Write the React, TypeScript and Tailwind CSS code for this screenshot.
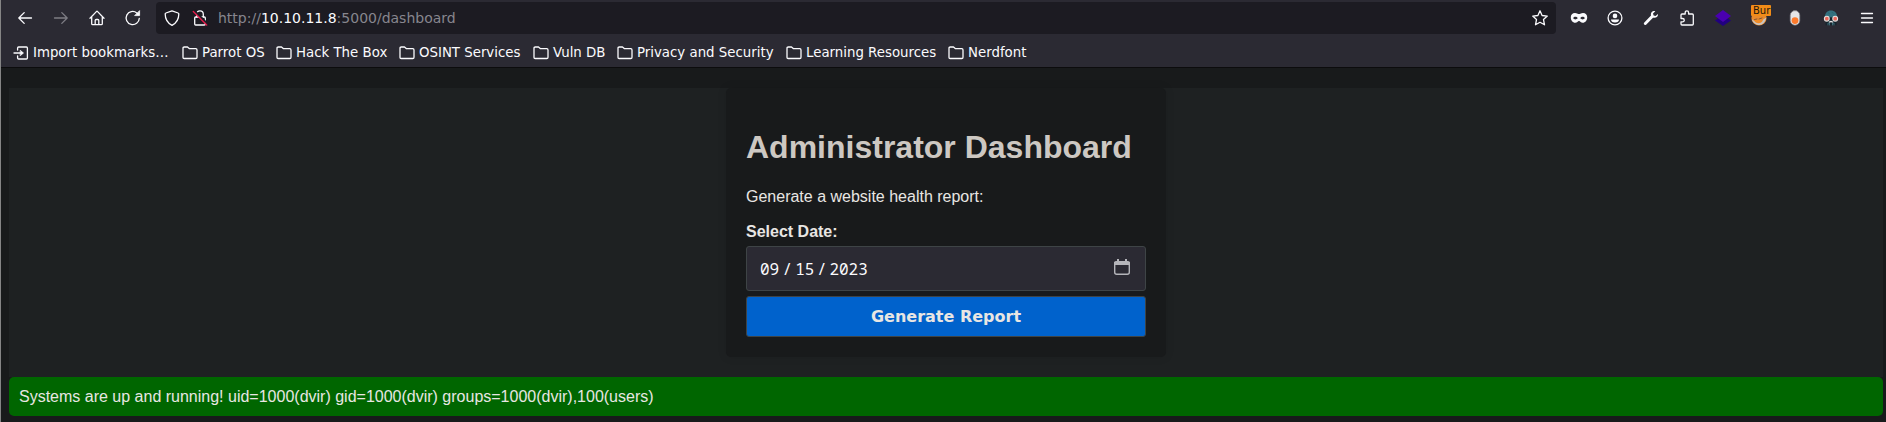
import type { ReactNode } from "react";

function Icon({ children, className = "" }: { children: ReactNode; className?: string }) {
  return (
    <svg viewBox="0 0 16 16" className={`h-4 w-4 shrink-0 overflow-visible ${className}`} fill="none" stroke="#fbfbfe" strokeWidth="1.3" strokeLinecap="round" strokeLinejoin="round">
      {children}
    </svg>
  );
}

function ToolButton({ children, label }: { children: ReactNode; label: string }) {
  return (
    <button aria-label={label} className="relative flex h-9 w-9 shrink-0 items-center justify-center">
      {children}
    </button>
  );
}

const bookmarks = [
  { name: "Parrot OS", width: "w-[94px]" },
  { name: "Hack The Box", width: "w-[123px]" },
  { name: "OSINT Services", width: "w-[134px]" },
  { name: "Vuln DB", width: "w-[84px]" },
  { name: "Privacy and Security", width: "w-[169px]" },
  { name: "Learning Resources", width: "w-[162px]" },
  { name: "Nerdfont", width: "w-[100px]" },
];

function NavigationBar() {
  return (
    <div className="flex h-9 pl-[6px]">
      <ToolButton label="Back">
        <Icon><path d="M14.5 8H1.8M7.2 2.6 1.8 8l5.4 5.4" /></Icon>
      </ToolButton>
      <ToolButton label="Forward">
        <Icon className="opacity-40"><path d="M1.5 8h12.7M8.8 2.6 14.2 8l-5.4 5.4" /></Icon>
      </ToolButton>
      <ToolButton label="Home">
        <Icon>
          <path d="M1 8.2 7.4 1.6q.6-.6 1.2 0L15 8.2M2.7 6.8v6.9q0 1 1 1h8.6q1 0 1-1V6.8M6.2 14.5v-4q0-1 1-1h1.6q1 0 1 1v4" />
        </Icon>
      </ToolButton>
      <ToolButton label="Reload">
        <Icon>
          <path d="M14.3 8.3A6.6 6.6 0 1 1 11.8 2.9L13.4 4.5" />
          <path d="M14.6 1v4.6H10z" fill="#fbfbfe" strokeWidth=".8" />
        </Icon>
      </ToolButton>
      <div className="mt-[2px] ml-[5px] flex h-8 w-[1400px] shrink-0 items-center rounded-[4px] bg-[#1c1b22] pl-2">
        <Icon>
          <path d="M8 .9 14.1 3q.7.2.7 1C14.8 9.5 12.6 13 8 15.3 3.4 13 1.2 9.5 1.2 4q0-.8.7-1z" />
        </Icon>
        <Icon className="ml-3">
          <path d="M4.7 7V4.2a3.3 3.3 0 0 1 6.6 0V7" />
          <rect x="2.7" y="7" width="10.6" height="8" rx="1" />
          <path d="M2.3 .5 15.7 14" stroke="#1c1b22" strokeWidth="1.8" />
          <path d="M1.3 1.5 14.7 15" stroke="#e31b4b" strokeWidth="1.4" />
        </Icon>
        <span className="ml-[10px] text-[14px] leading-8 text-[#87868e]">
          http://<span className="text-[#fbfbfe]">10.10.11.8</span>:5000/dashboard
        </span>
        <Icon className="mr-2 ml-auto">
          <path d="m8 .8 2.1 4.7 5.2.6-3.8 3.5 1 5.2L8 12.3l-4.5 2.5 1-5.2L.7 6.1l5.200-.6z" />
        </Icon>
      </div>
      <div className="ml-[5px] flex">
        <ToolButton label="Private mask">
          <Icon>
            <path fillRule="evenodd" fill="#fbfbfe" stroke="none" d="M4 3C5.700 3 6.700 4.100 8 4.100S10.300 3 12 3C14.600 3 16.200 4.600 16.200 7.300 16.200 10.400 14.400 12.800 11.700 12.800 9.900 12.800 9.200 11 8 11S6.100 12.800 4.300 12.800C1.600 12.800-.2 10.400-.2 7.300-.2 4.600 1.400 3 4 3M2.200 8C3 9.900 5.600 10 6.700 8 5.600 6.200 3 6.200 2.200 8M13.800 8C13 6.200 10.400 6.200 9.300 8 10.400 10 13 9.900 13.800 8" />
          </Icon>
        </ToolButton>
        <ToolButton label="Account">
          <Icon>
            <circle cx="8" cy="8" r="6.9" />
            <circle cx="8" cy="5.9" r="2.3" fill="#fbfbfe" stroke="none" />
            <path d="M4 9.600h8c0 1.700-1.500 3-4 3s-4-1.300-4-3" fill="#fbfbfe" stroke="none" />
          </Icon>
        </ToolButton>
        <ToolButton label="Developer tools">
          <Icon>
            <path d="M14.900 3.900 12.600 6.100 10.600 5.600 10 3.500 12.300 1.200C9.800.4 7.300 2.500 8 5.500L1.100 12.700c-1 1.300.7 3 2 2l6.900-7c3 .6 5.400-1.400 4.900-3.800" fill="#fbfbfe" stroke="none" />
          </Icon>
        </ToolButton>
        <ToolButton label="Extensions">
          <Icon>
            <path d="M2 6.200V5q0-1 1-1h3.200V2.500a1.700 1.700 0 0 1 3.400 0V4H13.300q1 0 1 1v9q0 1-1 1H3q-1 0-1-1v-2.200h1.600a1.650 1.650 0 0 0 0-3.300H2z" />
          </Icon>
        </ToolButton>
        <ToolButton label="Layers">
          <Icon>
            <path d="M0 10.500 8 5l8 5.500L8 16z" fill="#210080" stroke="none" />
            <path d="m0 5.900 8-5.800 8 5.800L8 12z" fill="#4a00b0" stroke="none" />
          </Icon>
        </ToolButton>
        <ToolButton label="Proxy">
          <Icon>
            <circle cx="8" cy="8" r="7.600" fill="#e88a2c" stroke="none" />
            <path d="M.8 9c3 3.500 8 3.500 14.400-1.500-.5 4-3.500 7.500-7 7.500S1.500 12.500.8 9" fill="#c9c4c2" stroke="none" />
            <path d="M2 8c4 1 7 .5 10.500-1-.5 4.500-2 6-4.500 6.200-2.500 0-5-1-6-5.200" fill="#f08c28" stroke="none" />
            <path d="M3.500 9.500 6 9m2 0 3-1" stroke="#755039" strokeWidth=".9" />
          </Icon>
          <span className="absolute top-[5px] left-[10px] flex h-[11px] w-5 items-center rounded-[1px] bg-[#f28c18] pl-[2px] text-[10px] leading-[11px] text-[#24170c]">
            Bur
          </span>
        </ToolButton>
        <ToolButton label="Toggle">
          <Icon>
            <rect x="3.2" y=".6" width="9.6" height="14.6" rx="4.8" fill="#e4e5e7" stroke="#77777c" strokeWidth=".7" />
            <circle cx="8" cy="10.6" r="3.4" fill="#fc7a2c" stroke="none" />
          </Icon>
        </ToolButton>
        <ToolButton label="User agent">
          <Icon>
            <path d="M1.800 7.500C1.800 3 4.500.5 8 .5S14.200 3 14.200 7.500z" fill="#32717f" stroke="none" />
            <path d="M2.500 7.500h11v7.700h-11z" fill="#16242d" stroke="none" />
            <path d="M5 15v-2h1.500v2m3 0v-2H11v2" stroke="#477b87" strokeWidth=".8" />
            <path d="M6.500 12q1.500-1 3 0" stroke="#e5e6e8" />
            <circle cx="3.8" cy="8.7" r="2.4" fill="#e96659" stroke="#e4dfdc" strokeWidth="1.1" />
            <circle cx="12.2" cy="8.7" r="2.4" fill="#e96659" stroke="#e4dfdc" strokeWidth="1.1" />
            <path d="m5.500 3 1 .7M9 2.200l1 1" stroke="#28606d" strokeWidth=".8" />
          </Icon>
        </ToolButton>
        <ToolButton label="Menu">
          <Icon><path d="M2.500 3.500h11M2.500 8h11M2.500 12.500h11" /></Icon>
        </ToolButton>
      </div>
    </div>
  );
}

function BookmarksBar() {
  return (
    <div className="flex h-[31px] items-center pt-[2px] pl-3 text-[13.333px] leading-5 whitespace-nowrap text-[#fbfbfe]">
      <div className="flex w-[169px] shrink-0 items-center gap-1">
        <Icon>
          <path d="M4.600 5V3q0-1 1-1h7.800q1 0 1 1v10q0 1-1 1H5.600q-1 0-1-1v-2M1 8h8" />
          <path d="M7.500 5.500 10.500 8l-3 2.500z" fill="#fbfbfe" strokeWidth=".7" />
        </Icon>
        Import bookmarks…
      </div>
      {bookmarks.map((bookmark) => (
        <div key={bookmark.name} className={`flex shrink-0 items-center gap-1 ${bookmark.width}`}>
          <Icon>
            <path d="M1 3.200q0-1.200 1.200-1.200h3.300l2 1.700h6.300Q15 3.700 15 4.900v7.400q0 1.200-1.200 1.200H2.200Q1 13.500 1 12.300z" />
          </Icon>
          {bookmark.name}
        </div>
      ))}
    </div>
  );
}

function ReportForm() {
  return (
    <section className="mx-auto flex h-[269px] w-[440px] flex-col rounded-[5px] bg-[#181a1b] px-5 shadow-[0_0_10px_rgba(0,0,0,0.1)]">
      <h1 className="mt-[41px] h-[37px] text-[32px] leading-[37px] font-bold whitespace-nowrap text-[#cdc8c2]">Administrator Dashboard</h1>
      <p className="mt-[22px] text-base leading-[18px]">Generate a website health report:</p>
      <label className="mt-[17px] text-base leading-[18px] font-bold">Select Date:</label>
      <div className="mt-[5px] flex h-[45px] items-center rounded-[3px] border border-[#3e4446] bg-[#2b2a33] pr-[15px] pl-[13px] text-[#fbfbfe]">
        <div className="flex font-['Noto_Sans_Mono','DejaVu_Sans_Mono',monospace] text-base leading-5">
          <span>09</span>
          <span className="w-4 text-center">/</span>
          <span>15</span>
          <span className="w-[15px] text-center">/</span>
          <span>2023</span>
        </div>
        <svg viewBox="0 0 16 16" className="mb-1 ml-auto h-4 w-4" fill="none" stroke="#b4b4b9">
          <path d="M.7 3v10.300q0 2 2 2h10.600q2 0 2-2V3" strokeWidth="1.4" />
          <path d="M0 6V4q0-2 2-2h1V0h2v2h6V0h2v2h1q2 0 2 2v2z" fill="#b4b4b9" stroke="none" />
        </svg>
      </div>
      <button className="mt-[5px] h-[41px] rounded-[3px] border border-[#3e4446] bg-[#0062cc] font-['DejaVu_Sans',sans-serif] text-base font-bold">
        Generate Report
      </button>
    </section>
  );
}

export default function App() {
  return (
    <div className="h-[422px] w-[1886px] overflow-hidden border-l border-[#858585] bg-[#181a1b] font-['Liberation_Sans',Arial,sans-serif] text-[#e8e6e3]">
      <header className="h-[68px] border-b border-[#0c0c0d] bg-[#2b2a33] font-['DejaVu_Sans',sans-serif]">
        <NavigationBar />
        <BookmarksBar />
      </header>
      <main className="mt-5 mr-[3px] ml-2">
        <div className="h-[289px] bg-[#1e2122]">
          <ReportForm />
        </div>
        <div className="h-[39px] rounded-[5px] bg-[#006600] pl-[10px] text-base leading-[39px]">
          Systems are up and running! uid=1000(dvir) gid=1000(dvir) groups=1000(dvir),100(users)
        </div>
      </main>
    </div>
  );
}
